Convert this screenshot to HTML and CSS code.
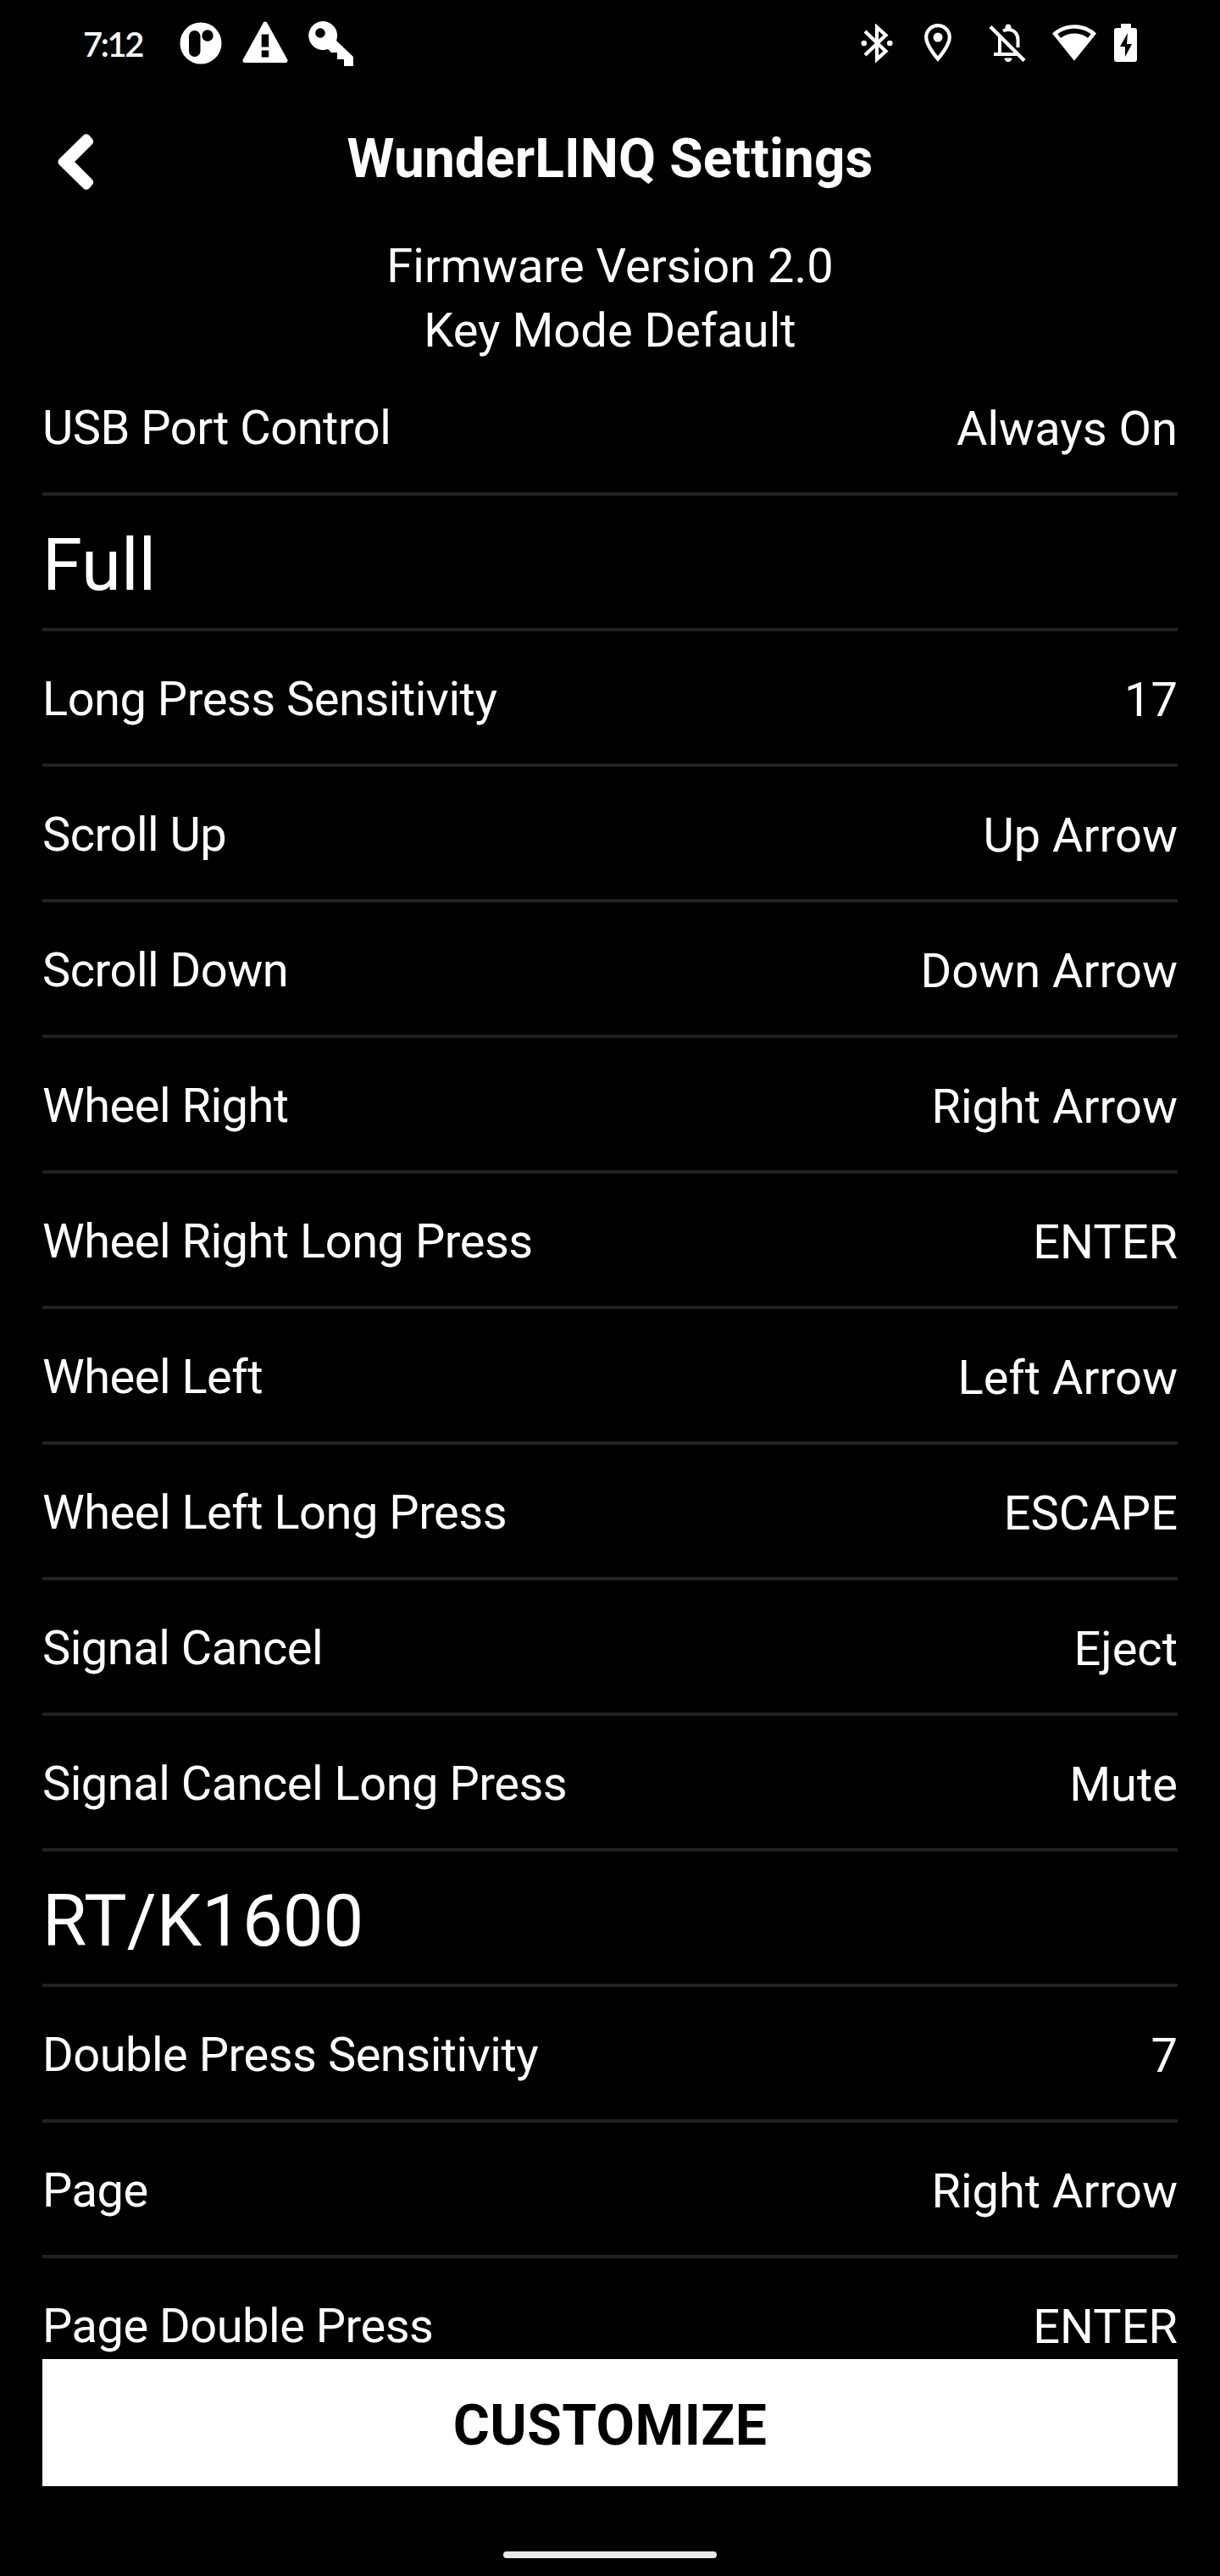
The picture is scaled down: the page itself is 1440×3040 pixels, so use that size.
FILE: index.html
```html
<!DOCTYPE html>
<html lang="en">
<head>
<meta charset="utf-8">
<title>WunderLINQ Settings</title>
<link rel="stylesheet" href="styles.css">
</head>
<body>
<div class="screen">
  <header class="status-bar">
    <div class="status-left">
      <span class="clock">7:12</span>
      <svg class="icon" width="50" height="50" viewBox="0 0 50 50"><circle cx="25" cy="25" r="24.5" fill="#fff"/><rect x="11" y="10" width="13.5" height="31" rx="6.7"/><circle cx="33" cy="16" r="6.7"/></svg>
      <svg class="icon icon-warning" width="54" height="50" viewBox="0 0 54 50"><path d="M27 3 51 46.500H3Z" fill="#fff" stroke="#fff" stroke-width="5" stroke-linejoin="round"/><path d="M22.700 15.500h8.500v15h-8.500zM22.700 34.500h8.500v8h-8.500z"/></svg>
      <svg class="icon icon-key" width="54" height="54" viewBox="0 0 54 54"><path d="M17 0a17 17 0 1 0 6 33l4 4h7v8h8v8h11V42L33 23A17 17 0 0 0 17 0Z" fill="#fff"/><circle cx="14" cy="14" r="5.800"/></svg>
    </div>
    <div class="status-right">
      <svg class="icon" width="38" height="46" viewBox="0 0 38 46"><path d="M5 9 29.500 32.500 19 42V4L29.500 13.500 5 37" fill="none" stroke="#fff" stroke-width="4.200"/><circle cx="3.800" cy="23" r="3.300" fill="#fff"/><circle cx="34.300" cy="23" r="3.300" fill="#fff"/></svg>
      <svg class="icon icon-pin" width="32" height="46" viewBox="0 0 32 46"><path d="M16 2.200C8.200 2.200 2.200 8.300 2.200 16c0 10 13.800 25.500 13.800 25.500S29.800 26 29.800 16C29.800 8.300 23.800 2.200 16 2.200Z" fill="none" stroke="#fff" stroke-width="4.200"/><circle cx="16" cy="16" r="5.500" fill="#fff"/></svg>
      <svg class="icon icon-bell" width="44" height="46" viewBox="0 0 44 46"><path d="M13 14.500V36M6 36h28M17 8.500c2-1 4-1.500 6-1.500 7.500 0 11.500 5.500 11.500 12V28" fill="none" stroke="#fff" stroke-width="4"/><path d="M19.500 7V4a3.500 3.500 0 0 1 7 0v3zM18.500 40.500h9a4.500 4.500 0 0 1-9 0Z" fill="#fff"/><path d="M2 3.500 42 43.500" stroke="#fff" stroke-width="4.500"/></svg>
      <svg class="icon icon-wifi" width="52" height="45" viewBox="0 0 54 46"><path d="M27 1C16.500 1 7 5 0 11.500L27 45 54 11.500C47 5 37.500 1 27 1Z" fill="#fff"/><path d="M27 5.500C19 5.500 12 8 6.500 12.300L10.500 17C15.500 13.500 21 11.600 27 11.600S38.500 13.500 43.500 17L47.500 12.300C42 8 35 5.500 27 5.500Z"/></svg>
      <svg class="icon icon-battery" width="28" height="46" viewBox="0 0 28 46"><path d="M8 0h12v5h4a3 3 0 0 1 3 3v34a3 3 0 0 1-3 3H3a3 3 0 0 1-3-3V8a3 3 0 0 1 3-3h5Z" fill="#fff"/><path d="M16 11 7 27h6v12l8-15h-6Z"/></svg>
    </div>
  </header>

  <div class="title-bar">
    <svg class="back" width="46" height="70" viewBox="0 0 46 70"><path d="M7.500 35 35.800 7.300 39 11 15 35 39 59 35.800 62.700Z" fill="#fff" stroke="#fff" stroke-width="10" stroke-linejoin="round"/></svg>
    <h1 class="title">WunderLINQ Settings</h1>
  </div>

  <div class="info">
    <div>Firmware Version 2.0</div>
    <div>Key Mode Default</div>
  </div>

  <main class="list">
    <div class="row"><span class="label">USB Port Control</span><span class="value">Always On</span></div>
    <div class="row heading"><span>Full</span></div>
    <div class="row"><span class="label">Long Press Sensitivity</span><span class="value">17</span></div>
    <div class="row"><span class="label">Scroll Up</span><span class="value">Up Arrow</span></div>
    <div class="row"><span class="label">Scroll Down</span><span class="value">Down Arrow</span></div>
    <div class="row"><span class="label">Wheel Right</span><span class="value">Right Arrow</span></div>
    <div class="row"><span class="label">Wheel Right Long Press</span><span class="value">ENTER</span></div>
    <div class="row"><span class="label">Wheel Left</span><span class="value">Left Arrow</span></div>
    <div class="row"><span class="label">Wheel Left Long Press</span><span class="value">ESCAPE</span></div>
    <div class="row"><span class="label">Signal Cancel</span><span class="value">Eject</span></div>
    <div class="row"><span class="label">Signal Cancel Long Press</span><span class="value">Mute</span></div>
    <div class="row heading"><span>RT/K1600</span></div>
    <div class="row"><span class="label">Double Press Sensitivity</span><span class="value">7</span></div>
    <div class="row"><span class="label">Page</span><span class="value">Right Arrow</span></div>
    <div class="row"><span class="label">Page Double Press</span><span class="value">ENTER</span></div>
  </main>

  <button class="customize">CUSTOMIZE</button>
  <div class="home-area"><div class="home-pill"></div></div>
</div>
</body>
</html>
```
FILE: styles.css
```css
* { box-sizing: border-box; }
body {
  margin: 0;
  background: #000;
  color: #fff;
  font-family: Roboto, "Liberation Sans", sans-serif;
}
.screen {
  width: 1440px;
  height: 3040px;
  display: flex;
  flex-direction: column;
  overflow: hidden;
}
.icon { display: block; flex: none; }
.status-bar {
  flex: none;
  height: 104px;
  padding: 0 97px 0 98px;
  display: flex;
  justify-content: space-between;
  align-items: flex-start;
}
.status-left, .status-right { display: flex; align-items: flex-start; }
.clock {
  width: 114px;
  padding-top: 28px;
  font-family: Lato, "Open Sans", sans-serif;
  font-size: 40px;
  line-height: 48px;
  font-weight: 600;
  letter-spacing: -2.4px;
}
.status-left .icon { margin-top: 26px; }
.status-left .icon-warning { margin: 25px 0 0 24px; }
.status-left .icon-key { margin: 25px 0 0 24px; }
.status-right .icon { margin-top: 28px; }
.status-right .icon-pin { margin-left: 37px; }
.status-right .icon-bell { margin-left: 44px; }
.status-right .icon-wifi { margin-left: 31px; }
.status-right .icon-battery { margin-left: 21px; }
.title-bar {
  flex: none;
  height: 166px;
  padding: 52px 66px 0;
  display: grid;
  grid-template-columns: 46px 1fr 46px;
}
.title {
  margin: -6px 0 0;
  text-align: center;
  font-size: 64px;
  line-height: 76px;
  font-weight: 700;
  letter-spacing: 0.1px;
}
.info {
  flex: none;
  height: 155px;
  padding-top: 6px;
  text-align: center;
  font-size: 56px;
  line-height: 76px;
}
.list {
  flex: none;
  height: 2359px;
  padding: 0 50px;
  overflow: hidden;
}
.row {
  height: 160px;
  border-bottom: 4px solid #212121;
  display: flex;
  justify-content: space-between;
  padding-top: 47px;
  font-size: 56px;
  line-height: 66px;
}
.label { letter-spacing: -0.5px; }
.value { padding-top: 1px; }
.heading { font-size: 85px; line-height: 98px; padding-top: 33px; }
.customize {
  flex: none;
  height: 150px;
  margin: 0 50px;
  padding: 7px 0 0;
  border: 0;
  background: #fff;
  color: #000;
  font: 700 66px/76px Roboto, "Liberation Sans", sans-serif;
  letter-spacing: 0.4px;
}
.home-area { height: 106px; padding-top: 77px; display: flex; justify-content: center; }
.home-pill { width: 252px; height: 8px; border-radius: 4px; background: #ebe9e9; }
```
